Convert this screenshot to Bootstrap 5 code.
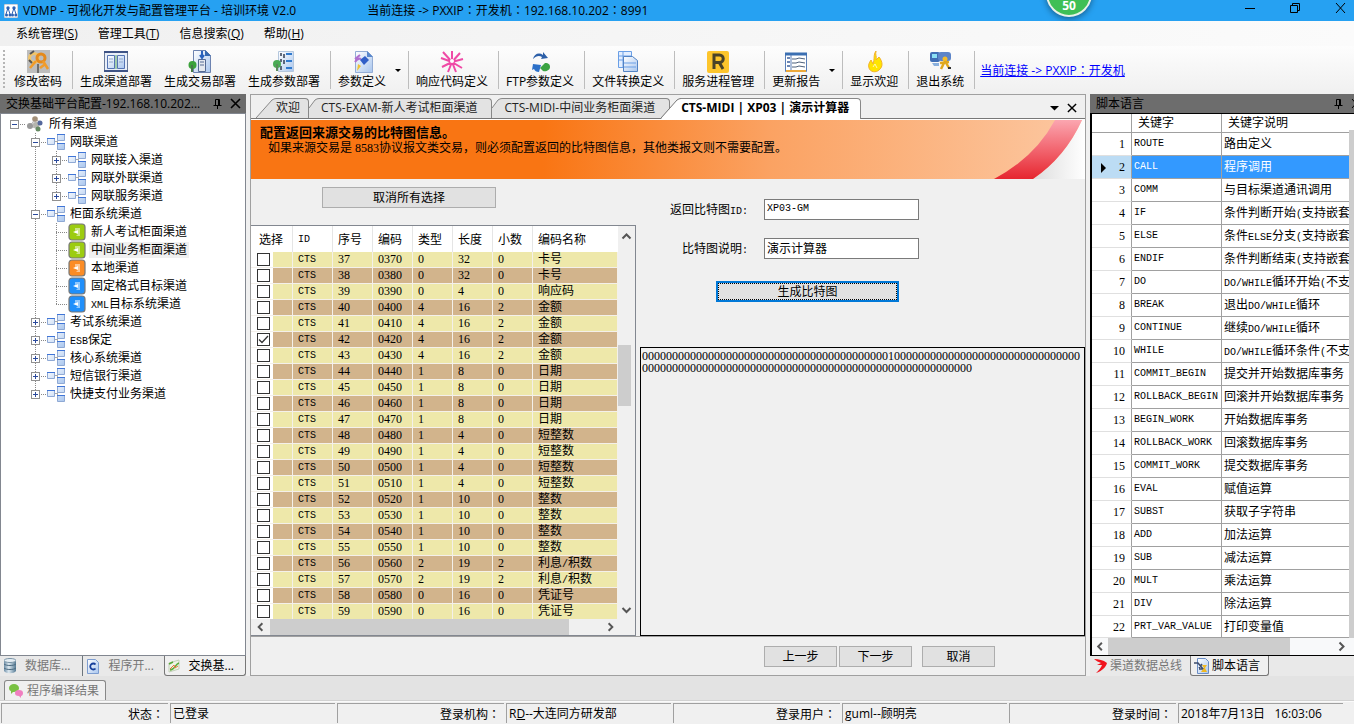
<!DOCTYPE html>
<html lang="zh-CN">
<head>
<meta charset="utf-8">
<meta name="viewport" content="width=device-width, initial-scale=1">
<title>VDMP - 可视化开发与配置管理平台</title>
<link href="https://cdn.jsdelivr.net/npm/bootstrap@5.3.0/dist/css/bootstrap.min.css" rel="stylesheet">
<style>
:root{--ui:"Open Sans","Noto Sans CJK SC",sans-serif;--song:"Liberation Serif","Noto Sans CJK SC",serif;--face:#f0f0f0;--line:#828790}
body{font:12px/16px var(--ui);color:#000;background:#e3e3e3;overflow-x:hidden}
button,input,textarea{font:inherit;color:inherit}
svg{display:block;flex:none}
.song{font-family:var(--song)}
.mono{font-family:"Liberation Mono",monospace;font-size:10px}
span.mono{line-height:10px}
.mid{font-family:"Noto Sans CJK TC",sans-serif}
.titlebar{background:#26a1f2;height:21px;overflow:hidden}
.appname{margin-left:5px}
.conn{margin-left:71px}
.capt{width:46px;height:21px;background:none;border:0;padding:0}
.ball{top:-29px;left:1046px;width:46px;height:46px;border-radius:50%;background:#3fbf55;border:2px solid #e8f2e8;box-shadow:0 2px 6px #0006;color:#fff;font:bold 12px/10px var(--ui);padding-bottom:4px}
.menubar{background:linear-gradient(90deg,#f0f0f0,#fbfbfb);height:25px;gap:20px}
.menubar a{color:#000;text-decoration:none}
.toolbar{background:linear-gradient(#fdfdfd,#f0f0f0);height:48px}
.grip{width:2px;margin:4px 3px;background:repeating-linear-gradient(#b5b5b5 0 2px,transparent 2px 4px)}
.tool{border:0;background:none;padding:2px 6px;white-space:nowrap}
.tool svg{margin:0 auto}
.vsep{width:1px;height:38px;margin:5px 1px 0 4px;background:#bdbdbd}
.drop{border:0;background:none;padding:0;width:12px}
.drop::after{content:"";display:block;margin:0 auto;border:3px solid transparent;border-top-color:#000;border-bottom:0;width:0}
.tool-link{color:#00f;text-decoration:underline;margin-left:4px}
.work{gap:4px;background:var(--face)}
.side{width:246px}
.rside{width:264px;overflow:hidden}
.phead{background:#6d6d6d;height:19px;padding:0 5px 0 6px}
.phead button,.docbtn{border:0;background:none;padding:0}
.tree{background:#fff;border:1px solid var(--line);padding-top:1px}
.tree ul{list-style:none;margin:0;padding:0}
.tree li{height:18px;padding-left:3px}
.gd{width:21px;height:18px;flex:none}
.knode{width:24px;height:18px;flex:none}
.pick{background:#f0f0f0;margin-left:-2px;padding:0 2px}
.btab{height:20px;color:#777;background:#e9e9e9}
.btab a,.btab2 a{color:inherit;text-decoration:none;gap:9px;height:20px}
.btab .on{background:var(--face);color:#000;border:1px solid #777;border-top:0;border-radius:0 0 3px 3px;padding:0 11px 0 3px}
.btab .tight{gap:3px;padding:0 8px 0 3px}
.btab2{height:25px;padding:4px 0 0 4px;border-bottom:1px solid #d2d2d2}
.btab2 a{background:var(--face);border:1px solid #888;border-bottom:0;border-radius:3px 3px 0 0;color:#777;gap:3px;padding:0 6px 0 3px}
.doc{background:var(--face);border:1px solid #a0a0a0;min-width:0}
.tabstrip{height:24px;padding:3px 4px 0 5px;border-bottom:1px solid #777}
.dtab{color:#222;text-decoration:none;height:20px;white-space:nowrap}
.dtab span{border:1px solid #888;border-width:1px 1px 0 0;border-radius:0 4px 0 0;background:#e3e3e3;height:20px;line-height:18px;padding-right:8px}
.dtab.cut span{padding:0 14px 0 2px}
.dtab.on{margin-left:-9px;font-weight:bold;z-index:1;height:21px}
.dtab.on span{background:#fff;height:21px;padding-right:11px;color:#000}
.banner{height:60px;border-top:1px solid #fff;background:linear-gradient(90deg,#f97513 0 35%,#fba262 62%,#fcc8a2 100%);padding:5px 9px}
.banner h1{font:bold 13px/16px var(--song);margin:0}
.banner p{margin:0;padding-left:8px;line-height:14px}
.wbtn{background:#e1e1e1;border:1px solid #adadad;height:21px;padding:0;line-height:18px}
.w-act{width:73px}
.w-clear{width:174px;margin:8px 0 17px 71px}
.gcol{width:385px;flex:none}
.gbox{border:1px solid var(--line);background:var(--face);border-left:0}
.gtab{border-collapse:separate;border-spacing:0;table-layout:fixed;width:367px;margin:0;background:#fff}
.gtab th{font-weight:normal;height:26px;padding:1px 0 0 5px;border-right:1px solid #e5e5e5}
.gtab th:first-child{padding-left:8px}
.gtab th:last-child{border-right:0}
.gtab td{height:16px;padding:0 0 0 5px;line-height:15px;border:solid #f4f0ea;border-width:0 1px 1px 0;white-space:nowrap;overflow:hidden;background:#eee8aa}
.gtab tbody tr:last-child td{height:15px;border-bottom:0}
.gtab tr:nth-child(even) td{background:#d2b48c}
.gtab tr td:first-child{padding-left:6px;background:linear-gradient(90deg,#fff 22px,transparent 22px),#eee8aa}
.gtab tr:nth-child(even) td:first-child{background:linear-gradient(90deg,#fff 22px,transparent 22px),#d2b48c}
.gtab input{appearance:none;display:block;width:13px;height:13px;margin:0;border:1px solid #333;background:#fff;border-radius:0}
.gtab input:checked{background:#fff url("data:image/svg+xml,%3Csvg xmlns='http://www.w3.org/2000/svg' viewBox='0 0 11 11'%3E%3Cpath d='M1 5.500l3 3L10 2' fill='none' stroke='%23333' stroke-width='1.300'/%3E%3C/svg%3E")}
.vs{width:17px}
.above{flex:98 0 0}
.below{flex:195 0 0}
.hs{height:17px}
.gbox .hs{height:16px}
.thumb{background:#cdcdcd}
.frm{padding-top:20px}
.frow label{width:108px;text-align:right}
.frow{gap:16px;height:21px;margin-bottom:18px}
.frow input{width:155px;height:21px;border:1px solid #7a7a7a;background:#fff;padding:0 2px 2px;border-radius:0}
.gen{width:183px;margin:4px 0 45px 76px;border:2px solid #0078d7;outline:1px dotted #000;outline-offset:-3px;line-height:16px}
.bits{border:1px solid #000;background:var(--face);resize:none;padding:2px 1px;line-height:12px;word-break:break-all;border-radius:0;overflow:hidden;width:100%}
.acts{height:39px;border-top:1px solid #a0a0a0;padding:9px 90px 0 0;gap:2px}
.kbox{background:#fff;border:1px solid #000;border-width:1px 0 1px 2px;overflow:hidden}
.ktab{border-collapse:separate;border-spacing:0;table-layout:fixed;width:257px;margin:0}
.ktab th,.ktab td{border:solid #a0a0a0;border-width:0 1px 1px 0;padding:0 0 0 2px;font-weight:normal;white-space:nowrap;overflow:hidden}
.ktab th{height:19px;padding-left:6px}
.ktab td{height:23px}
.ktab tbody tr:last-child td{height:22px}
.ktab td:first-child{text-align:right;padding-right:6px;border-bottom-color:#e0e0e0}
.ktab tr>:last-child{border-right:0}
.ktab .sel td{background:#3399ff;color:#fff}
.ktab .sel td:first-child{background:#bcdcf4;color:#000}
.cur{float:left;margin:4px 0 0 7px;border:5px solid transparent;border-left-color:#000;border-right:0}
.status{background:var(--face);height:23px;gap:2px;padding:1px 11px 0 1px;border-top:1px solid #fafafa}
.status div{flex:1 1 0;border:solid #a0a0a0;border-width:1px 0 0 1px;height:20px;line-height:19px;padding:0 2px;white-space:nowrap;min-width:0}
.status .r{text-align:right;padding-right:4px}
</style>
</head>
<body class="d-flex flex-column min-vh-100">
<svg class="position-absolute" width="0" height="0" aria-hidden="true">
<defs>
<linearGradient id="gb" x2="1" y2="1"><stop stop-color="#fff"/><stop offset="1" stop-color="#a9c6ee"/></linearGradient>
<linearGradient id="sw" y2="1" x2="0"><stop stop-color="#fba6b0"/><stop offset=".5" stop-color="#f26670"/><stop offset="1" stop-color="#e6262f"/></linearGradient>
<linearGradient id="wh" x1="0" x2="1"><stop stop-color="#ddd"/><stop offset="1" stop-color="#fff"/></linearGradient>
<linearGradient id="db" x2="1"><stop stop-color="#6f8fa8"/><stop offset=".4" stop-color="#dce8f0"/><stop offset="1" stop-color="#557a94"/></linearGradient>
</defs>
<symbol id="pin" viewBox="0 0 9 11"><path d="M2.500 7V1.500h4V7M.500 7.500h8M4.500 8v3M5.500 2v5" fill="none" stroke="#000"/></symbol>
<symbol id="x" viewBox="0 0 11 11"><path d="M1 1l9 9M10 1l-9 9" stroke="#000" stroke-width="1.600"/></symbol>
<symbol id="al" viewBox="0 0 17 17"><path d="M10.500 4.500l-4 4 4 4" fill="none" stroke="#555" stroke-width="2"/></symbol>
<symbol id="ar" viewBox="0 0 17 17"><path d="M6.500 4.500l4 4-4 4" fill="none" stroke="#555" stroke-width="2"/></symbol>
<symbol id="au" viewBox="0 0 17 17"><path d="M4.500 11l4-4 4 4" fill="none" stroke="#555" stroke-width="2"/></symbol>
<symbol id="ad" viewBox="0 0 17 17"><path d="M4.500 6l4 4 4-4" fill="none" stroke="#555" stroke-width="2"/></symbol>
<symbol id="net" viewBox="0 0 18 18"><path d="M7 8.500h3M10.500 4v9M10 4.500h2M10 13.500h2" stroke="#aaa" fill="none"/><g fill="url(#gb)" stroke="#8fa9d4"><path d="M.500 5.500h7v6h-7zM10.500 1.500h7v6h-7zM10.500 10.500h7v6h-7z"/></g><path d="M0 5.500h8M10 1.500h8M10 10.500h8" stroke="#3f75d8"/></symbol>
<symbol id="root" viewBox="0 0 18 18"><path d="M9 4L4 11l8 3 2-7z" stroke="#bbb" fill="#ddd"/><circle cx="9" cy="4" r="2.800" fill="#a3907a"/><circle cx="4" cy="11" r="3" fill="#999"/><circle cx="10" cy="10" r="3" fill="#b5b5ae"/><circle cx="14" cy="8" r="2.500" fill="#55689c"/><circle cx="12" cy="14" r="2.500" fill="#668a62"/></symbol>
<symbol id="leaf" viewBox="0 0 18 18"><rect x="1" y="1" width="16" height="16" rx="3" fill="currentColor" stroke="#777" stroke-width="1.200"/><path d="M7 5h5v8H8l2-2V7L7 8z" fill="#fff" opacity=".5"/><path d="M5 9l5-2v4z" fill="#fff"/></symbol>
</svg>

<header class="titlebar position-relative d-flex align-items-center">
  <svg class="ms-1" width="14" height="14" viewBox="0 0 14 14"><rect width="14" height="14" rx="1" fill="#fff" stroke="#9ab"/><path d="M4 4L2 10M4 4l2 6M10 4L8 10M10 4l2 6" stroke="#2c62b5"/><g fill="#2c62b5"><circle cx="4" cy="4" r="1.700"/><circle cx="10" cy="4" r="1.700"/><circle cx="2.500" cy="11" r="1.500"/><circle cx="6" cy="11" r="1.500"/><circle cx="8.500" cy="11" r="1.500"/><circle cx="11.800" cy="11" r="1.500"/></g></svg>
  <span class="appname text-nowrap">VDMP - 可视化开发与配置管理平台 - 培训环境 V2.0</span>
  <span class="conn text-nowrap">当前连接 -&gt; PXXIP<span class="mid" lang="zh-TW">：</span>开发机<span class="mid" lang="zh-TW">：</span>192.168.10.202<span class="mid" lang="zh-TW">：</span>8991</span>
  <div class="ball position-absolute d-flex align-items-end justify-content-center">50</div>
  <div class="ms-auto d-flex">
    <button class="capt" aria-label="最小化"><svg width="46" height="21"><path d="M29 8.500h10" stroke="#000"/></svg></button>
    <button class="capt" aria-label="还原"><svg width="46" height="21"><path d="M28.500 5.500h7v7h-7zM30.500 5V3.500h7v7H36" fill="none" stroke="#000"/></svg></button>
    <button class="capt" aria-label="关闭"><svg width="46" height="21"><path d="M28 3l9 10M37 3l-9 10" stroke="#000"/></svg></button>
  </div>
</header>

<nav class="menubar d-flex align-items-center ps-3">
  <a href="#">系统管理(<u>S</u>)</a><a href="#">管理工具(<u>T</u>)</a><a href="#">信息搜索(<u>Q</u>)</a><a href="#">帮助(<u>H</u>)</a>
</nav>

<div class="toolbar d-flex">
  <div class="grip"></div>
  <button class="tool"><svg width="24" height="24" viewBox="0 0 24 24"><path d="M1 0h23v23H1z" fill="#bdbdbd"/><circle cx="8" cy="8" r="4.500" fill="none" stroke="#f0c46a" stroke-width="3"/><path d="M4 4l4-3M3 10l3 3" stroke="#555" stroke-width="2"/><circle cx="15" cy="8" r="4" fill="none" stroke="#e58a1c" stroke-width="3"/><path d="M10 11l-6 7M17 11l5 8M18 15l-4 3" stroke="#f09b2a" stroke-width="2.500"/><path d="M12 14v9" stroke="#555" stroke-width="1.500"/></svg>修改密码</button>
  <div class="vsep"></div>
  <button class="tool"><svg width="24" height="24" viewBox="0 0 24 24"><path d="M.500 1.500h23v20H.500z" fill="#e9eff8" stroke="#6b7c9c"/><path d="M0 2h24M0 21h24" stroke="#3f5486" stroke-width="2"/><path d="M3.500 5.500h7v13h-7zM13.500 5.500h7v13h-7z" fill="url(#gb)" stroke="#5574b4"/><path d="M5 9h4M5 12h4M15 9h4M15 12h4" stroke="#8fa7cc"/><path d="M12 5v14" stroke="#5aaa62"/></svg>生成渠道部署</button>
  <button class="tool"><svg width="24" height="24" viewBox="0 0 24 24"><path d="M5.500.500h12l5 5v17h-17z" fill="url(#gb)" stroke="#6d83b0"/><path d="M17 0v6h6" fill="#3569b0"/><path d="M10.500 9.500h7v12h-7z" fill="#e4e8ef" stroke="#556a94"/><path d="M12 12h4M12 15h4" stroke="#556a94"/><path d="M14 1v7M12 5l2 3 2-3" stroke="#2862bd" stroke-width="2" fill="none"/><circle cx="4.500" cy="15" r="4" fill="#3ba23b"/><path d="M4 15v7" stroke="#477947" stroke-width="2"/></svg>生成交易部署</button>
  <button class="tool"><svg width="24" height="24" viewBox="0 0 24 24"><path d="M6.500 1.500h15v20h-15z" fill="url(#gb)" stroke="#b4c7dd"/><path d="M9 3v3M12 4v4M9 9v3M12 10v4M9 16v4" stroke="#303c52" stroke-width="1.500"/><path d="M14 4h6M14 11h6M14 18h6" stroke="#2f79cd" stroke-width="2"/><circle cx="5" cy="14" r="4" fill="#4aab55"/><path d="M5 14v7" stroke="#5a8b5a" stroke-width="2"/></svg>生成参数部署</button>
  <div class="vsep"></div>
  <button class="tool"><svg width="24" height="24" viewBox="0 0 24 24"><path d="M5.500 1.500h12l5 5v16h-17z" fill="url(#gb)" stroke="#94add5"/><path d="M17 1v6h6z" fill="#5b88cc"/><path d="M5 9l5-4M5 12c2-3 4-4 6-3" stroke="#b070d0" stroke-width="2" fill="none"/><path d="M10 10l5-4 4 4-5 5z" fill="#315fc7"/><path d="M8 14l3 2-4 5z" fill="#efc334"/></svg>参数定义</button><button class="drop" aria-label="更多参数定义"></button>
  <div class="vsep"></div>
  <button class="tool"><svg width="24" height="24" viewBox="0 0 24 24"><path d="M12 12L3 2M12 12L12 1M12 12L20 3M12 12L1 8M12 12L23 9M12 12L2 17M12 12L8 22M12 12L16 22M12 12L22 18" stroke="#ef4aa6" stroke-width="2"/><circle cx="12" cy="11" r="2" fill="#fff"/></svg>响应代码定义</button>
  <div class="vsep"></div>
  <button class="tool"><svg width="24" height="24" viewBox="0 0 24 24"><path d="M5 9c1-5 6-7 10-4V2l5 6-7 1 1-2c-3-2-6-1-9 2z" fill="#2c5fa8"/><path d="M13 15l-2 7c-3 0-4-1-5-3l-2 1 1-6z" fill="#2c70c8"/><path d="M12 18l5-5c4 0 5 2 5 4 0 3-4 5-7 4z" fill="#3ba343"/></svg>FTP参数定义</button>
  <div class="vsep"></div>
  <button class="tool"><svg width="24" height="24" viewBox="0 0 24 24"><path d="M2.500 1.500h13v16h-13z" fill="#e4efff" stroke="#6a9fe6"/><path d="M2 6h13M2 10h6M7 1v16" stroke="#6a9fe6"/><path d="M7.500 6.500h9l5 4v11h-14z" fill="url(#gb)" stroke="#5283c4"/><path d="M8 13h12M8 17h12" stroke="#6a9fe6"/></svg>文件转换定义</button>
  <div class="vsep"></div>
  <button class="tool"><svg width="24" height="24" viewBox="0 0 24 24"><rect x="1" y="1" width="22" height="22" rx="2" fill="#fdc52c"/><path d="M8 19V5h5.500a3.500 3.500 0 010 7.500H8M13 12l4 7" stroke="#4a4228" stroke-width="3" fill="none"/></svg>服务进程管理</button>
  <div class="vsep"></div>
  <button class="tool"><svg width="24" height="24" viewBox="0 0 24 24"><path d="M1.500 3.500h21v18h-21z" fill="#fff" stroke="#5a7fb8"/><path d="M1 4h22" stroke="#3b6fb2" stroke-width="3"/><path d="M3 8h3M3 12h3M3 16h3" stroke="#6c86b4" stroke-width="2"/><path d="M8 9h4l3-1 6 1M8 13h4l3-1 6 1M8 17h4l3-1 6 1" stroke="#4d607c" fill="none"/><path d="M2 21h20" stroke="#eca93a" stroke-width="2"/><path d="M7 5v15" stroke="#5a7fb8"/></svg>更新报告</button><button class="drop" aria-label="更多更新报告"></button>
  <div class="vsep"></div>
  <button class="tool"><svg width="24" height="24" viewBox="0 0 24 24"><path d="M14 1c-1 4 1 5 0 9l3-3c4 5 4 10 0 13-3 3-9 2-10-2-1-3 0-5 2-8l2 4c2-5 0-9 3-13z" fill="#ffe500" stroke="#f2b22a"/><path d="M11 17l2-3 2 4" stroke="#fff8b0" fill="none"/></svg>显示欢迎</button>
  <div class="vsep"></div>
  <button class="tool"><svg width="24" height="24" viewBox="0 0 24 24"><rect x="2" y="2" width="10" height="10" rx="2" fill="#3f6eb5"/><rect x="10" y="2" width="13" height="9" rx="3" fill="#5c84c8"/><path d="M4 4h5v4H4z" fill="#8be0f4"/><path d="M4 13h7v3H6z" fill="#8ab0dd"/><circle cx="17" cy="9" r="2.500" fill="#f4bc28"/><path d="M17 11l-4 8M17 11l4 7M12 13l9-1" stroke="#e0a81c" stroke-width="2.500"/><path d="M20 18h3" stroke="#333" stroke-width="2"/></svg>退出系统</button>
  <div class="vsep"></div>
  <a class="tool-link align-self-center" href="#">当前连接 -&gt; PXXIP<span class="mid" lang="zh-TW">：</span>开发机</a>
</div>

<main class="work d-flex flex-fill">
  <aside class="side d-flex flex-column flex-shrink-0">
    <div class="phead d-flex align-items-center"><span>交换基础平台配置-192.168.10.202...</span>
      <button class="ms-auto me-2" aria-label="固定"><svg width="9" height="11"><use href="#pin"/></svg></button><button aria-label="关闭面板"><svg width="11" height="11"><use href="#x"/></svg></button></div>
    <div class="tree song flex-fill"><ul id="tree"></ul></div>
    <div class="btab d-flex">
      <a href="#" class="d-flex align-items-center ps-1 pe-1"><svg width="12" height="16" viewBox="0 0 12 16"><path d="M0 2v11c2 3 10 3 12 0V2z" fill="url(#db)"/><ellipse cx="6" cy="2.500" rx="6" ry="2" fill="#e6eef4" stroke="#7893a5"/><path d="M0 6c2 2 10 2 12 0M0 10c2 2 10 2 12 0" stroke="#4d6c82" fill="none"/></svg>数据库...</a>
      <a href="#" class="d-flex align-items-center ms-2 ps-1 border-start border-secondary"><svg width="12" height="15" viewBox="0 0 12 15"><path d="M.500.500h8l3 3v11H.500z" fill="url(#gb)" stroke="#7d9dd0"/><path d="M8.500 5.500a3 3 0 100 4" fill="none" stroke="#173f9b" stroke-width="1.800"/></svg>程序开...</a>
      <a href="#" class="on d-flex align-items-center ms-auto"><svg width="12" height="14" viewBox="0 0 12 14"><path d="M1 4l10-3v9L1 13z" fill="#eef4e6" stroke="#c2cfb8"/><path d="M1 5l4-2M2 11c5 0 5-6 9-7" stroke="#5aaa3a" fill="none" stroke-width="1.500"/><path d="M2 10l4-4 1 3 3-2" stroke="#e8743a" fill="none"/></svg>交换基...</a>
    </div>
  </aside>

  <section class="doc d-flex flex-column flex-fill">
    <nav class="tabstrip d-flex">
      <a class="dtab d-flex" href="#"><svg width="20" height="20"><path d="M0 20L16 2Q18 .500 20 .500V20z" fill="#e3e3e3"/><path d="M0 20L16 2Q18 .500 20 .500" fill="none" stroke="#888"/></svg><span>欢迎</span></a>
      <a class="dtab cut d-flex" href="#"><svg width="10" height="20"><path d="M0 10L6 2Q8 .500 10 .500V20H0z" fill="#e3e3e3"/><path d="M0 10L6 2Q8 .500 10 .500" fill="none" stroke="#888"/></svg><span>CTS-EXAM-新人考试柜面渠道</span></a>
      <a class="dtab cut d-flex" href="#"><svg width="10" height="20"><path d="M0 10L6 2Q8 .500 10 .500V20H0z" fill="#e3e3e3"/><path d="M0 10L6 2Q8 .500 10 .500" fill="none" stroke="#888"/></svg><span>CTS-MIDI-中间业务柜面渠道</span></a>
      <a class="dtab on d-flex" href="#"><svg width="20" height="21"><path d="M0 21L16 2Q18 .500 20 .500V21z" fill="#fff"/><path d="M0 20L16 2Q18 .500 20 .500" fill="none" stroke="#777"/></svg><span>CTS-MIDI | XP03 | 演示计算器</span></a>
      <button class="docbtn ms-auto me-2" aria-label="标签列表"><svg width="9" height="6"><path d="M0 1h9L4.500 5.500z"/></svg></button>
      <button class="docbtn me-1" aria-label="关闭标签"><svg width="10" height="10" viewBox="0 0 11 11"><use href="#x"/></svg></button>
    </nav>
    <div class="banner song position-relative">
      <svg class="position-absolute end-0 top-0" width="100" height="59" viewBox="0 0 100 60" preserveAspectRatio="none"><path d="M97 0Q80 38 48 60H100V0z" fill="url(#wh)"/><path d="M70 0Q50 38 9 60H48Q80 38 97 0z" fill="url(#sw)"/></svg>
      <h1>配置返回来源交易的比特图信息。</h1>
      <p>如果来源交易是 8583协议报文类交易，则必须配置返回的比特图信息，其他类报文则不需要配置。</p>
    </div>
    <div class="d-flex flex-fill song">
      <div class="gcol">
        <button class="wbtn w-clear">取消所有选择</button>
        <div class="gbox">
          <div class="d-flex">
            <table class="gtab">
              <colgroup><col width="42"><col width="40"><col width="40"><col width="40"><col width="40"><col width="40"><col width="40"><col width="85"></colgroup>
              <thead><tr><th>选择</th><th class="mono">ID</th><th>序号</th><th>编码</th><th>类型</th><th>长度</th><th>小数</th><th>编码名称</th></tr></thead>
              <tbody id="codes"></tbody>
            </table>
            <div class="vs d-flex flex-column"><svg width="17" height="20" viewBox="0 0 17 17"><use href="#au"/></svg><div class="above"></div><div class="thumb me-1" id="vthumb"></div><div class="below"></div><svg width="17" height="17"><use href="#ad"/></svg></div>
          </div>
          <div class="hs d-flex pe-3"><svg width="19" height="16"><use href="#al"/></svg><div class="flex-fill"><div class="thumb h-100" id="hthumb"></div></div><svg width="17" height="16"><use href="#ar"/></svg></div>
        </div>
      </div>
      <div class="flex-fill d-flex flex-column ms-1 frm">
        <div class="frow d-flex align-items-center"><label for="bid">返回比特图<span class="mono">ID:</span></label><input id="bid" class="mono" value="XP03-GM"></div>
        <div class="frow d-flex align-items-center"><label for="bdesc">比特图说明<span class="mono">:</span></label><input id="bdesc" value="演示计算器"></div>
        <button class="wbtn gen">生成比特图</button>
        <textarea class="bits flex-fill" readonly aria-label="比特图" id="bits"></textarea>
      </div>
    </div>
    <div class="acts song d-flex justify-content-end align-items-start"><button class="wbtn w-act">上一步</button><button class="wbtn w-act me-2">下一步</button><button class="wbtn w-act">取消</button></div>
  </section>

  <aside class="rside d-flex flex-column flex-shrink-0">
    <div class="phead d-flex align-items-center pe-0"><span>脚本语言</span>
      <button class="ms-auto me-2" aria-label="固定"><svg width="9" height="11"><use href="#pin"/></svg></button><button aria-label="关闭面板"><svg width="3" height="11"><path d="M0 1l4 4.500L0 10" transform="translate(1)" stroke="#000" fill="none"/></svg></button></div>
    <div class="kbox song flex-fill d-flex flex-column">
      <div class="d-flex flex-fill">
        <table class="ktab align-self-start"><colgroup><col width="40"><col width="90"><col></colgroup>
          <thead><tr><th></th><th>关键字</th><th>关键字说明</th></tr></thead><tbody id="keys"></tbody></table>
        <div class="thumb flex-fill mt-3"></div>
      </div>
      <div class="hs d-flex"><div class="bg-light d-flex w-100"><svg width="16" height="17"><use href="#al"/></svg><div class="thumb" id="kthumb"></div><svg class="ms-auto me-1" width="17" height="17"><use href="#ar"/></svg></div></div>
    </div>
    <div class="btab d-flex">
      <a href="#" class="tight d-flex align-items-center"><svg width="14" height="14" viewBox="0 0 14 14"><path d="M1 0c5 0 9 1 13 4-1 4-5 8-11 10 3-3 5-5 6-8H4l4-2C6 3 3 2 1 0z" fill="#f0141e"/></svg>渠道数据总线</a>
      <a href="#" class="on tight d-flex align-items-center"><svg width="15" height="16" viewBox="0 0 15 16"><path d="M3.500.500h8l3 3v12h-11z" fill="url(#gb)" stroke="#6a8dc4"/><path d="M0 5h4l5 6M5 11h6M8 6l-3 4" stroke="#3c4c6c" stroke-width="1.500" fill="none"/><path d="M8 7h5l-2 3 2 4H7l3-4z" fill="#f0b820"/></svg>脚本语言</a>
    </div>
  </aside>
</main>

<div class="btab2 d-flex"><a href="#" class="d-flex align-items-center"><svg width="16" height="16" viewBox="0 0 16 16"><path d="M1 5a5 4 0 1110 0c0 3-3 4-6 4l-2 2V8C2 8 1 7 1 5z" fill="#7ac143"/><path d="M7 10a4 3 0 118 0c0 2-1 3-2 3v2l-2-2c-3 0-4-1-4-3z" fill="#f07fc0"/></svg>程序编译结果</a></div>
<footer class="status d-flex">
  <div class="r">状态<span class="mid" lang="zh-TW">：</span></div><div>已登录</div><div class="r">登录机构<span class="mid" lang="zh-TW">：</span></div><div>R<u>D</u>--大连同方研发部</div><div class="r">登录用户<span class="mid" lang="zh-TW">：</span></div><div>guml--顾明亮</div><div class="r">登录时间<span class="mid" lang="zh-TW">：</span></div><div>2018年7月13日 &nbsp; 16:03:06</div>
</footer>

<script src="https://cdn.jsdelivr.net/npm/bootstrap@5.3.0/dist/js/bootstrap.bundle.min.js"></script>
<script>
const $ = id => document.getElementById(id);
// Latin runs are set in the half-width face
const mix = s => s.replace(/[A-Z_\/(]+/g, m => `<span class="mono">${m}</span>`);

// Tree nodes: depth, icon, label, expander (+, - or none), last child, colour
const nodes = [
  [0,'root','所有渠道','-'],[1,'net','网联渠道','-'],[2,'net','网联接入渠道','+'],[2,'net','网联外联渠道','+'],[2,'net','网联服务渠道','+',1],
  [1,'net','柜面系统渠道','-'],[2,'leaf','新人考试柜面渠道','',0,'#9ccc10'],[2,'leaf','中间业务柜面渠道','',0,'#9ccc10'],[2,'leaf','本地渠道','',0,'#fb8c25'],
  [2,'leaf','固定格式目标渠道','',0,'#1f8ffb'],[2,'leaf','XML目标系统渠道','',1,'#1f8ffb'],
  [1,'net','考试系统渠道','+'],[1,'net','ESB保定','+'],[1,'net','核心系统渠道','+'],[1,'net','短信银行渠道','+'],[1,'net','快捷支付业务渠道','+',1]];
const dot = 'stroke="#888" stroke-dasharray="1 1"';
$('tree').innerHTML = nodes.map(([d, ic, t, ex, last, col]) => {
  let g = '';
  for (let i = 0; i < d; i++) g += `<svg class="gd">${i === 1 ? `<path d="M10.500 0v18" ${dot}/>` : ''}</svg>`;
  g += `<svg class="gd">${d ? `<path d="M10.500 0v${last ? 9 : 18}" ${dot}/>` : ''}<path d="M10 9.500h11" ${dot}/>` +
    (ex ? `<rect x="6.500" y="5.500" width="8" height="8" fill="#fff" stroke="#919191"/><path d="M8 9.500h5${ex === '+' ? 'M10.500 7v5' : ''}" stroke="#2b4a9c"/>` : '') + '</svg>';
  return `<li class="d-flex align-items-center">${g}<svg class="knode" ${col ? `color="${col}"` : ''}><use href="#${ic}" width="18" height="18" x="1"/></svg><span class="${t[0] === '中' ? 'pick' : ''}">${mix(t)}</span></li>`;
}).join('');

// Code runs: type, length, decimals, name, count
const rows = [['0','32','0','卡号',2],['0','4','0','响应码',1],['4','16','2','金额',4],['1','8','0','日期',4],['1','4','0','短整数',4],['1','10','0','整数',4],['2','19','2','利息/积数',2],['0','16','0','凭证号',2]];
let n = 37;
$('codes').innerHTML = rows.map(([ty, len, dec, name, c]) => Array.from({length: c}, () => {
  const k = n++;
  return `<tr><td><input type="checkbox" aria-label="选择 ${k}"${k === 42 ? ' checked' : ''}></td><td class="mono">CTS</td><td>${k}</td><td>0${k}0</td><td>${ty}</td><td>${len}</td><td>${dec}</td><td>${mix(name)}</td></tr>`;
}).join('')).join('');

const keys = [['ROUTE','路由定义'],['CALL','程序调用'],['COMM','与目标渠道通讯调用'],['IF','条件判断开始(支持嵌套'],['ELSE','条件ELSE分支(支持嵌套'],['ENDIF','条件判断结束(支持嵌套'],
  ['DO','DO/WHILE循环开始(不支'],['BREAK','退出DO/WHILE循环'],['CONTINUE','继续DO/WHILE循环'],['WHILE','DO/WHILE循环条件(不支'],['COMMIT_BEGIN','提交并开始数据库事务'],
  ['ROLLBACK_BEGIN','回滚并开始数据库事务'],['BEGIN_WORK','开始数据库事务'],['ROLLBACK_WORK','回滚数据库事务'],['COMMIT_WORK','提交数据库事务'],['EVAL','赋值运算'],['SUBST','获取子字符串'],
  ['ADD','加法运算'],['SUB','减法运算'],['MULT','乘法运算'],['DIV','除法运算'],['PRT_VAR_VALUE','打印变量值']];
$('keys').innerHTML = keys.map(([k, t], i) => `<tr class="${i === 1 ? 'sel' : ''}"><td>${i === 1 ? '<i class="cur"></i>' : ''}${i + 1}</td><td class="mono">${k}</td><td>${mix(t)}</td></tr>`).join('');

$('bits').value = '0'.repeat(41) + '1' + '0'.repeat(86);
$('vthumb').style.height = '61px';
$('hthumb').style.width = '90%';
$('kthumb').style.width = '182px';
</script>
</body>
</html>
